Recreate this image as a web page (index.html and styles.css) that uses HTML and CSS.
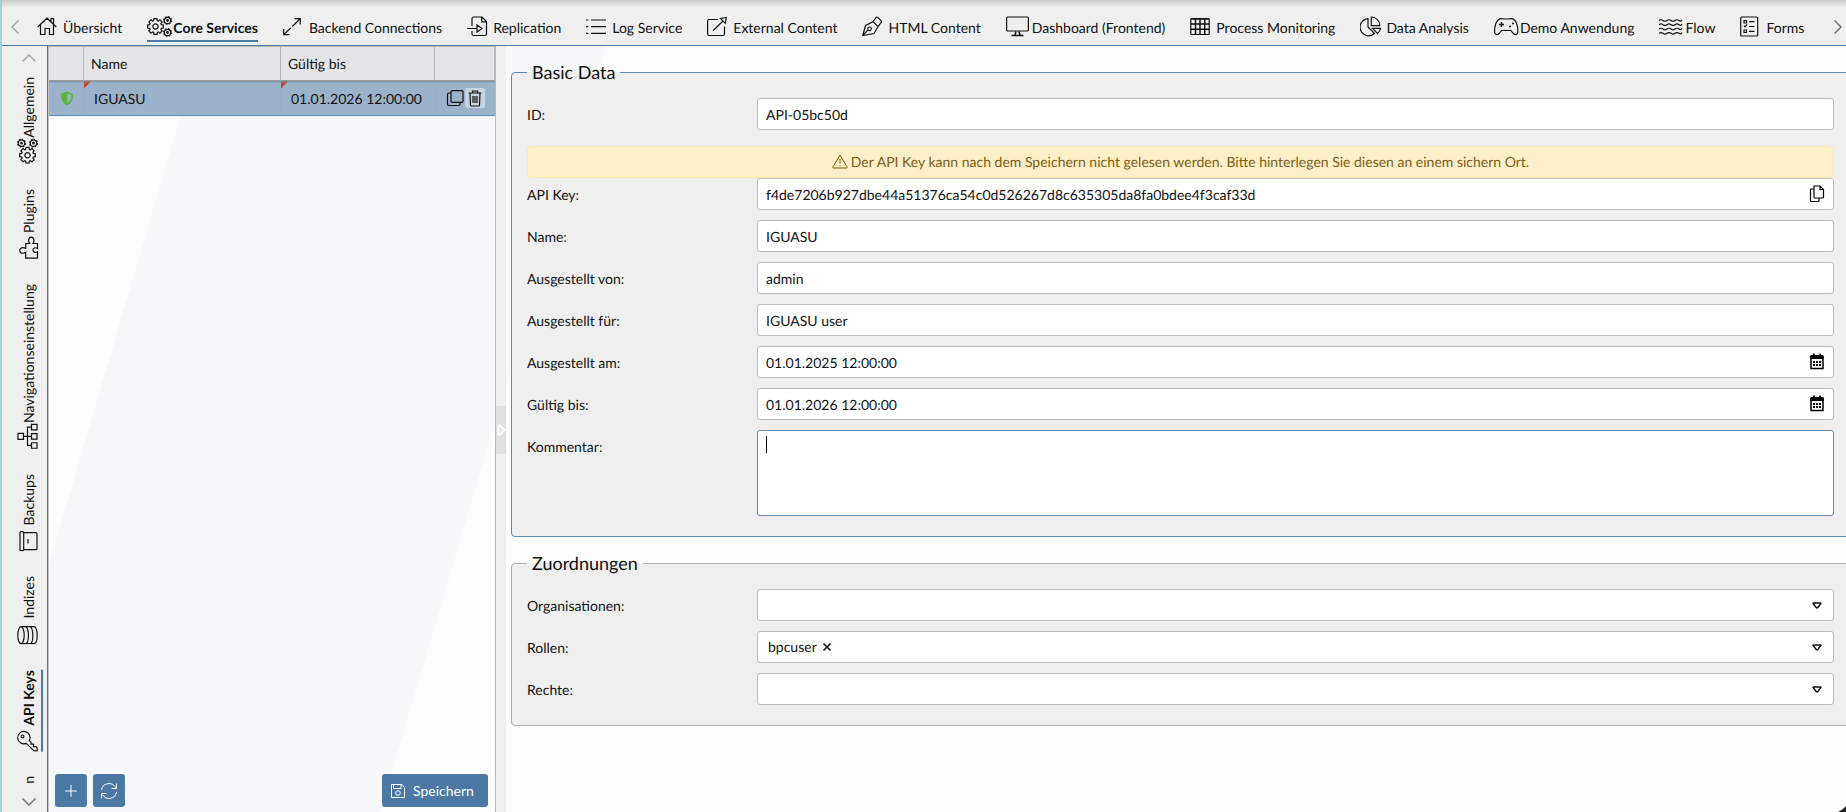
FILE: index.html
```
<!DOCTYPE html>
<html lang="de">
<head>
    <meta charset="UTF-8">
    <meta name="viewport" content="width=device-width, initial-scale=1.0">
    <title>API Keys</title>
    <link rel="stylesheet" href="styles.css">
</head>
<body>
    <svg class="sprite" aria-hidden="true">
        <symbol id="gear" viewBox="-9 -9 18 18" overflow="visible">
            <path vector-effect="non-scaling-stroke" d="M-1.9-6.2L-1.6-8.3H1.6L1.9-6.2 3-5.7 4.7-7 7-4.7 5.7-3 6.2-1.9 8.3-1.6V1.6L6.2 1.9 5.7 3 7 4.7 4.7 7 3 5.7 1.9 6.2 1.6 8.3H-1.6L-1.9 6.2-3 5.7-4.7 7-7 4.7-5.7 3-6.2 1.9-8.3 1.6V-1.6L-6.2-1.9-5.7-3-7-4.7-4.7-7-3-5.7Z"/>
            <circle vector-effect="non-scaling-stroke" r="2.8"/>
        </symbol>
        <symbol id="gears" viewBox="0 0 26 26">
            <use href="#gear" x="0" y="4" width="17" height="17"/>
            <circle cx="20.500" cy="6.500" r="3.200"/>
            <circle cx="20.500" cy="18.500" r="3.200"/>
            <circle cx="20.500" cy="6.500" r="3.900" stroke-dasharray="1.600 1.460"/>
            <circle cx="20.500" cy="18.500" r="3.900" stroke-dasharray="1.600 1.460"/>
            <circle cx="20.500" cy="6.500" r=".8"/>
            <circle cx="20.500" cy="18.500" r=".8"/>
        </symbol>
        <symbol id="calendar" viewBox="0 0 16 18">
            <path d="M2 5h12v10.500H2z" fill="none" stroke="#000" stroke-width="1.500"/>
            <path d="M1 3.500Q1 2 2.500 2H4V.5h1.800V2h4.400V.5H12V2h1.500Q15 2 15 3.500V6H1z" fill="#000"/>
            <path d="M4 8h2v2H4zM7 8h2v2H7zM10 8h2v2h-2zM4 11h2v2H4zM7 11h2v2H7zM10 11h2v2h-2z" fill="#000"/>
        </symbol>
    </svg>

    <nav class="topbar">
        <button class="scroll" aria-label="Zurück"><svg class="chevron" viewBox="0 0 10 16"><path d="M8.500 1.500 2 8l6.500 6.500"/></svg></button>
        <div class="tabs">
            <a href="#" class="tab"><svg viewBox="0 0 26 26"><path d="M.7 13 10 4.200l9.300 8.800M3.500 11v9.500H8v-6h4.500v6h4V11M14 7.500v-3h2.500v5.700"/></svg><span>Übersicht</span></a>
            <a href="#" class="tab active"><svg viewBox="0 0 26 26"><use href="#gears"/></svg><span>Core Services</span></a>
            <a href="#" class="tab"><svg viewBox="0 0 26 26"><path d="M1 20.400 7.800 14M9.200 12.500 17 5M11.500 4.700h5.800v5.800M.7 15v5.700h5.800"/></svg><span>Backend Connections</span></a>
            <a href="#" class="tab"><svg viewBox="0 0 26 26"><path d="M5 12V4.500A1.500 1.500 0 0 1 6.500 3H15l4.500 4.500v12.500a1.500 1.500 0 0 1-1.500 1.500H6.500A1.500 1.500 0 0 1 5 20v-3M14.700 3v4.800h4.800M0 14.500h9.500M10 11l5 3.500-5 3.500z"/></svg><span>Replication</span></a>
            <a href="#" class="tab"><svg viewBox="0 0 26 26"><path d="M0 6h2.200M5 6h15M0 12.700h2.200M5 12.700h15M0 19.300h2.200M5 19.300h15"/></svg><span>Log Service</span></a>
            <a href="#" class="tab"><svg viewBox="0 0 26 26"><path d="M11 5.500H2A1.500 1.500 0 0 0 .6 7v13A1.500 1.500 0 0 0 2 21.500h14a1.500 1.500 0 0 0 1.500-1.500v-7.500M6 16.700 16 7M13.500 4.500l5.800-1-1 5.800z"/></svg><span>External Content</span></a>
            <a href="#" class="tab"><svg viewBox="0 0 26 26"><path d="m.8 21.500 2.700-10L11 7.700l5 5-4 6.800zM1 21.200l5-5M11 7.700l3-4q1-1 2 0l3 3q1 1 0 2l-3 4"/><circle cx="7.500" cy="14.800" r="1.800"/></svg><span>HTML Content</span></a>
            <a href="#" class="tab"><svg viewBox="0 0 26 26"><rect x=".6" y="3" width="21.800" height="14" rx="1"/><path d="M10 17.500 9 21M13 17.500l1 3.500M5.500 21.500h12" stroke-width="1.600"/></svg><span>Dashboard (Frontend)</span></a>
            <a href="#" class="tab"><svg viewBox="0 0 26 26"><rect x=".8" y="4.500" width="18.400" height="16" rx="1"/><path d="M.8 5h18.400M.8 10h18.400M.8 15.300h18.400M5.500 5v15.500M10 5v15.500M14.700 5v15.500" stroke-width="1.500"/></svg><span>Process Monitoring</span></a>
            <a href="#" class="tab"><svg viewBox="0 0 26 26"><path d="M8 4.600a8.600 8.600 0 1 0 6.500 14.900L8 13zM11.300 3v8.700h8.500A8.500 8.500 0 0 0 11.300 3zM12.500 14.300h8a7 7 0 0 1-3 5.200z"/></svg><span>Data Analysis</span></a>
            <a href="#" class="tab"><svg viewBox="0 0 26 26"><path d="M4 6c2-1.600 4-1.500 6-1h4.500c2-.5 4-.6 6 1 2.500 3 3.600 8 3.300 12.500-.3 2.500-3.300 2.700-4.800.7L17 16.500H7.500l-2 2.700c-1.500 2-4.500 1.800-4.800-.7C.4 14 1.500 9 4 6z"/><path d="M7.500 8v5M5 10.500h5M15 12.500h2M18 9.500h2" stroke-width="1.600"/></svg><span>Demo Anwendung</span></a>
            <a href="#" class="tab"><svg viewBox="0 0 26 26"><path d="M0 6.500q2-1.500 4 0t4 0 4 0 4 0 4 0 3-.7M0 10.700q2-1.500 4 0t4 0 4 0 4 0 4 0 3-.7M0 15q2-1.500 4 0t4 0 4 0 4 0 4 0 3-.7M0 19.300q2-1.500 4 0t4 0 4 0 4 0 4 0 3-.7"/></svg><span>Flow</span></a>
            <a href="#" class="tab"><svg viewBox="0 0 26 26"><rect x=".7" y="3" width="17" height="19" rx="1"/><path d="M4 6.500h2.500V9H4zM4 11.500l1 1.300 2-2.300M4 16h2.500v2.500H4zM9 7.700h5.500M9 12.500h5.500M9 17.300h5.500"/></svg><span>Forms</span></a>
        </div>
        <button class="scroll" aria-label="Weiter"><svg class="chevron dark" viewBox="0 0 10 16"><path d="M1.500 1.500 8 8l-6.500 6.500"/></svg></button>
    </nav>

    <div class="workspace">
        <nav class="sidebar">
            <button class="scroll" aria-label="Nach oben"><svg class="chevron flat" viewBox="0 0 16 10"><path d="M1.500 8.500 8 2l6.500 6.500"/></svg></button>
            <div class="side-tabs">
                <a href="#" class="side-tab"><svg viewBox="0 0 26 26"><use href="#gears"/></svg><span>Allgemein</span></a>
                <a href="#" class="side-tab"><svg viewBox="0 0 26 26"><path d="M.8 22.500V10.700h6C5 8 5.500 4.700 8.500 4.700S12 8 10.500 10.700h5v4c2-1.700 6.300-1.400 6.300 1.600s-4.300 3.200-6.300 1.700v4.500h-5c1.500-2.500.5-4.500-1.500-4.500s-3 2-1.700 4.500z"/></svg><span>Plugins</span></a>
                <a href="#" class="side-tab"><svg viewBox="0 0 26 26"><path d="M9.500 3h6v5.500h-6zM.7 16.500h5.500v5.500H.7zM9.800 16.500h5.500v5.500H9.800zM19 16.500h5.500v5.500H19zM12.500 8.500v8M3.500 16.500v-4h18.300v4"/></svg><span>Navigationseinstellung</span></a>
                <a href="#" class="side-tab"><svg viewBox="0 0 26 26"><rect x=".7" y="5" width="19" height="3.700" rx="1"/><path d="M1.700 8.700v12q0 1.300 1.300 1.300h14.500q1.300 0 1.300-1.300v-12M8 13h4.500"/></svg><span>Backups</span></a>
                <a href="#" class="side-tab"><svg viewBox="0 0 26 26"><ellipse cx="9.300" cy="6" rx="8.500" ry="3.200"/><path d="M.8 6v13c0 4.200 17 4.200 17 0V6M.8 10.300c0 4.200 17 4.200 17 0M.8 14.700c0 4.200 17 4.200 17 0"/></svg><span>Indizes</span></a>
                <a href="#" class="side-tab active"><svg viewBox="0 0 26 26"><path d="M8.300 11.300A6.200 6.200 0 1 1 11 14.300L9.500 16H7.500v2.500H5V21l-1.500 1.200H.8V19z"/><circle cx="15.300" cy="7.500" r="1.400"/></svg><span>API Keys</span></a>
                <a href="#" class="side-tab"><span>n</span></a>
            </div>
            <button class="scroll" aria-label="Nach unten"><svg class="chevron flat dark" viewBox="0 0 16 10"><path d="M1.500 1.500 8 8l6.500-6.500"/></svg></button>
        </nav>

        <section class="keys">
            <table class="grid">
                <colgroup><col class="col-state"><col class="col-name"><col class="col-date"><col class="col-actions"></colgroup>
                <thead>
                    <tr><th></th><th>Name</th><th>Gültig bis</th><th></th></tr>
                </thead>
                <tbody>
                    <tr>
                        <td class="state"><svg class="shield" viewBox="0 0 14 15"><path d="M7 .5 13.300 3c0 5-1.800 9.500-6.300 11.500C2.500 12.500.7 8 .7 3z" fill="#5ab53c"/><path d="M7.300 2.500v9.800c2.700-1.800 4-4.800 4.200-8.100z" fill="#9ab3cb"/></svg></td>
                        <td class="dirty">IGUASU</td>
                        <td class="dirty">01.01.2026 12:00:00</td>
                        <td>
                            <div class="actions">
                                <button aria-label="Kopieren"><svg viewBox="0 0 18 18"><rect x="5" y="1.700" width="12" height="11.600" rx="1"/><path d="M5 4H3Q1.500 4 1.500 5.500V15q0 1.500 1.500 1.500h9.500q1.500 0 1.500-1.500v-1.700"/></svg></button>
                                <button class="hover" aria-label="Löschen"><svg viewBox="0 0 18 18"><path d="M2.500 4h13M6.500 4V2h5v2M4 4l.5 12q0 1 1 1h7q1 0 1-1L14 4M7 7v7M9 7v7M11 7v7"/></svg></button>
                            </div>
                        </td>
                    </tr>
                </tbody>
            </table>
            <div class="toolbar">
                <button class="btn icon" aria-label="Hinzufügen"><svg viewBox="0 0 18 18"><path d="M9 3v12M3 9h12"/></svg></button>
                <button class="btn icon" aria-label="Aktualisieren"><svg viewBox="0 0 18 18"><path d="M1.500 8A7.500 7.500 0 0 1 15.500 5.500M16.500 1.500v5h-5M16.500 10a7.500 7.500 0 0 1-14 2.500M1.500 16.500v-5h5"/></svg></button>
                <button class="btn save"><svg viewBox="0 0 16 16"><path d="M1.500 1.500h10.500l2.500 3v10h-13zM3.500 1.500v4h7.500v-4"/><circle cx="8" cy="10" r="2.300"/></svg>Speichern</button>
            </div>
        </section>

        <div class="splitter"><button aria-label="Bereich einklappen"><svg viewBox="0 0 10 14"><path d="M2.500 2.500v9q.5 1 1.500 0L8.500 7 4 2.500q-1-1-1.500 0z"/></svg></button></div>

        <main class="detail">
            <form>
                <fieldset class="focused">
                    <legend>Basic Data</legend>
                    <div class="row"><label for="id">ID:</label><input type="text" id="id" value="API-05bc50d"></div>
                    <p class="warning"><svg viewBox="0 0 16 15"><path d="M8 1 15.200 13.200Q15.400 14 14.500 14h-13Q.6 14 .8 13.200zM8 5v4.500M8 11v1.300"/></svg>Der API Key kann nach dem Speichern nicht gelesen werden. Bitte hinterlegen Sie diesen an einem sichern Ort.</p>
                    <div class="row">
                        <label for="key">API Key:</label>
                        <div class="field"><input type="text" id="key" value="f4de7206b927dbe44a51376ca54c0d526267d8c635305da8fa0bdee4f3caf33d"><button type="button" class="trigger" aria-label="API Key kopieren"><svg viewBox="0 0 16 18"><path d="M5 1h6l3.500 3.500v7.500q0 1-1 1H6q-1 0-1-1zM11 1v3.500h3.500M5 4H2.500q-1 0-1 1v10.500q0 1 1 1H9q1 0 1-1V13" fill="none" stroke="#000" stroke-width="1.200"/></svg></button></div>
                    </div>
                    <div class="row"><label for="name">Name:</label><input type="text" id="name" value="IGUASU"></div>
                    <div class="row"><label for="by">Ausgestellt von:</label><input type="text" id="by" value="admin"></div>
                    <div class="row"><label for="for">Ausgestellt für:</label><input type="text" id="for" value="IGUASU user"></div>
                    <div class="row">
                        <label for="issued">Ausgestellt am:</label>
                        <div class="field"><input type="text" id="issued" value="01.01.2025 12:00:00"><button type="button" class="trigger" aria-label="Datum wählen"><svg viewBox="0 0 16 18"><use href="#calendar"/></svg></button></div>
                    </div>
                    <div class="row">
                        <label for="until">Gültig bis:</label>
                        <div class="field"><input type="text" id="until" value="01.01.2026 12:00:00"><button type="button" class="trigger" aria-label="Datum wählen"><svg viewBox="0 0 16 18"><use href="#calendar"/></svg></button></div>
                    </div>
                    <div class="row">
                        <label for="comment">Kommentar:</label>
                        <div class="field caret"><textarea id="comment"></textarea></div>
                    </div>
                </fieldset>

                <fieldset>
                    <legend>Zuordnungen</legend>
                    <div class="row">
                        <label for="orgs">Organisationen:</label>
                        <div class="field"><select id="orgs"><option></option></select><svg class="arrow" viewBox="0 0 10 7"><path d="M1.500 1h7q.7 0 .3.700L6 5.300q-1 .8-2 0L1.200 1.700Q.8 1 1.500 1z"/></svg></div>
                    </div>
                    <div class="row">
                        <label for="roles">Rollen:</label>
                        <div class="field"><select id="roles"><option></option></select><span class="chip">bpcuser<button type="button" aria-label="bpcuser entfernen"><svg viewBox="0 0 10 10"><path d="m1.500 1.500 7 7M8.500 1.500l-7 7"/></svg></button></span><svg class="arrow" viewBox="0 0 10 7"><path d="M1.500 1h7q.7 0 .3.700L6 5.300q-1 .8-2 0L1.200 1.700Q.8 1 1.500 1z"/></svg></div>
                    </div>
                    <div class="row">
                        <label for="rights">Rechte:</label>
                        <div class="field"><select id="rights"><option></option></select><svg class="arrow" viewBox="0 0 10 7"><path d="M1.500 1h7q.7 0 .3.700L6 5.300q-1 .8-2 0L1.200 1.700Q.8 1 1.500 1z"/></svg></div>
                    </div>
                </fieldset>
            </form>
        </main>
    </div>
</body>
</html>
```
FILE: styles.css
```
* {
    box-sizing: border-box;
}
body {
    margin: 0;
    height: 100vh;
    display: flex;
    flex-direction: column;
    overflow: hidden;
    position: relative;
    border-left: 2px solid #a9d0d9;
    font-family: Lato, "Liberation Sans", sans-serif;
    font-size: 14px;
    text-rendering: geometricPrecision;
    color: #111;
    background: #fdfdfd;
}
/* darker end of the window edge and the rounded window corner */
body::before {
    content: "";
    position: absolute;
    left: -2px;
    bottom: 0;
    width: 2px;
    height: 80px;
    background: #4b79a4;
}
body::after {
    content: "";
    position: absolute;
    right: 0;
    bottom: 0;
    width: 8px;
    height: 6px;
    background: #1c201e;
    clip-path: polygon(100% 0, 100% 100%, 0 100%, 55% 60%);
}
button {
    padding: 0;
    border: none;
    background: none;
    font: inherit;
    cursor: pointer;
}
svg {
    flex: none;
    display: block;
    fill: none;
    stroke: #111;
    stroke-width: 1.2;
}
.sprite {
    position: absolute;
    width: 0;
    height: 0;
}

/* top navigation */
.topbar {
    display: flex;
    align-items: center;
    height: 46px;
    padding: 11px 3px 0 8px;
    border-bottom: 1px solid #4b79a4;
    background: linear-gradient(#cbcbcb, #efefef 8px);
}
.topbar .scroll {
    margin-bottom: 2px;
}
.tabs {
    flex: 1;
    display: flex;
    gap: 25px;
    min-width: 0;
    overflow: hidden;
    padding-left: 17px;
}
.tab {
    display: flex;
    align-items: center;
    height: 28px;
    border-bottom: 2px solid transparent;
    color: inherit;
    text-decoration: none;
    white-space: nowrap;
}
.tab svg,
.side-tab svg {
    width: 26px;
    height: 26px;
}
.tab.active {
    border-color: #4b79a4;
    font-weight: bold;
}
.chevron {
    width: 10px;
    height: 16px;
    stroke: #aaa;
    stroke-width: 1.5;
}
.chevron.flat {
    width: 16px;
    height: 10px;
}
.chevron.dark {
    stroke: #777;
}

.workspace {
    flex: 1;
    display: flex;
    min-height: 0;
    position: relative;
}
/* pale diagonal facets behind the panels */
.workspace::before,
.workspace::after {
    content: "";
    position: absolute;
    inset: 0;
    z-index: -1;
    background: #f7f8fa;
    clip-path: polygon(199px 0, 604px 0, 378px 100%, 0 100%, 0 679px);
}
.workspace::after {
    background: #f5f7f9;
    clip-path: polygon(129px 240px, 278px 100%, 0 100%, 0 679px);
}

/* side navigation */
.sidebar {
    width: 46px;
    display: flex;
    flex-direction: column;
    align-items: flex-start;
    padding: 7px 0 5px 13px;
    border-right: 1px solid #4b79a4;
    background: #efefef;
}
.sidebar .scroll {
    padding-left: 6px;
}
.side-tabs {
    flex: 1;
    min-height: 0;
    overflow: hidden;
    display: flex;
    flex-direction: column;
    gap: 25px;
    padding-top: 14px;
    margin-bottom: 10px;
}
.side-tab {
    flex: none;
    display: flex;
    align-items: center;
    writing-mode: vertical-rl;
    transform: rotate(180deg);
    width: 28px;
    border-left: 2px solid transparent;
    color: inherit;
    text-decoration: none;
    white-space: nowrap;
}
.side-tab svg {
    transform: rotate(90deg);
}
.side-tab.active {
    border-color: #4b79a4;
    font-weight: bold;
}

/* key list */
.keys {
    width: 448px;
    display: flex;
    flex-direction: column;
    border-left: 1px solid #c4c4c4;
    border-right: 1px solid #b8b8b8;
}
.grid {
    width: 100%;
    table-layout: fixed;
    border-collapse: separate;
    border-spacing: 0;
}
.col-state {
    width: 35px;
}
.col-name {
    width: 197px;
}
.col-date {
    width: 154px;
}
.grid th {
    height: 35px;
    padding: 0 7px;
    border-top: 1px solid #b8b8b8;
    border-right: 1px solid #b8b8b8;
    border-bottom: 1px solid #999;
    background: #e4e5e7;
    font-weight: normal;
    text-align: left;
}
.grid td {
    height: 35px;
    padding: 0 10px;
    background: #9ab3cb;
    border-bottom: 1px solid #6288ad;
    box-shadow: inset 0 2px 2px -1px #7890a6;
}
.grid .state {
    padding: 0 11px;
}
.grid .dirty {
    background: linear-gradient(135deg, #c8472c 5px, transparent 5px) no-repeat #9ab3cb;
}
.shield {
    width: 14px;
    height: 15px;
    stroke: none;
}
.actions {
    display: flex;
}
.actions button {
    padding: 1px;
    border-radius: 2px;
}
.actions button.hover {
    background: #c7d4e1;
}
.actions svg {
    width: 18px;
    height: 18px;
}
.toolbar {
    display: flex;
    gap: 6px;
    margin-top: auto;
    padding: 5px 7px 5px 6px;
}
.btn {
    display: flex;
    align-items: center;
    justify-content: center;
    height: 33px;
    border-radius: 3px;
    background: #4b79a4;
    color: #fff;
}
.btn svg {
    width: 18px;
    height: 18px;
    stroke: #fff;
    stroke-width: 1;
}
.btn.icon {
    width: 32px;
}
.btn.save {
    width: 106px;
    justify-content: flex-start;
    gap: 7px;
    margin-left: auto;
    padding-left: 8px;
}
.btn.save svg {
    width: 16px;
    height: 16px;
}

.splitter {
    width: 10px;
    display: flex;
    align-items: center;
    padding-top: 2px;
    background: #efefef;
}
.splitter button {
    height: 48px;
    background: #e1e1e1;
}
.splitter svg {
    width: 10px;
    height: 14px;
    stroke: #fff;
    stroke-width: 2;
}

/* form; the fieldsets run out under the right window edge */
.detail {
    flex: 1;
    min-width: 0;
    overflow: hidden;
    padding-left: 5px;
}
fieldset {
    min-width: 0;
    margin: 14px -4px 0 0;
    padding: 14px 15px 20px;
    border: 1px solid #b0b0b0;
    border-radius: 4px;
    background: #efefef;
}
fieldset.focused {
    border-color: #5c8ab3;
}
legend {
    padding: 0 5px;
    font-size: 18px;
    line-height: 24px;
}
.row {
    display: flex;
    align-items: flex-start;
    min-height: 32px;
    margin-top: 10px;
}
legend + .row {
    margin-top: 0;
}
.row label {
    width: 230px;
    margin-bottom: -2px;
    line-height: 34px;
}
.row > input,
.field {
    flex: 1;
    min-width: 0;
}
.field {
    position: relative;
    display: flex;
}
input,
textarea,
select {
    display: block;
    width: 100%;
    height: 32px;
    margin: 0;
    padding: 0 8px;
    border: 1px solid #bdbdbd;
    border-radius: 3px;
    background: #fff;
    color: inherit;
    font: inherit;
    text-rendering: inherit;
    outline: none;
}
select {
    appearance: none;
}
textarea {
    height: 86px;
    padding: 5px 8px;
    border-color: #5c8ab3;
    resize: none;
}
.caret::before {
    content: "";
    position: absolute;
    left: 9px;
    top: 6px;
    width: 1px;
    height: 17px;
    background: #000;
}
.trigger {
    position: absolute;
    right: 9px;
    top: 7px;
}
.trigger svg {
    width: 16px;
    height: 18px;
    stroke: none;
}
.arrow {
    position: absolute;
    right: 12px;
    top: 13px;
    width: 10px;
    height: 7px;
    stroke-width: 1.5;
    pointer-events: none;
}
.chip {
    position: absolute;
    left: 11px;
    top: 0;
    display: flex;
    align-items: center;
    gap: 5px;
    line-height: 32px;
}
.chip svg {
    width: 10px;
    height: 10px;
    stroke-width: 1.6;
}
.warning {
    display: flex;
    align-items: center;
    justify-content: center;
    gap: 3px;
    height: 32px;
    margin: 16px 0 0;
    padding-bottom: 1px;
    border: 1px solid #fde9b0;
    border-radius: 4px;
    background: #fdf0c9;
    color: #7d5b12;
}
.warning svg {
    width: 16px;
    height: 15px;
    stroke: #7d5b12;
    stroke-width: 1;
}
.warning + .row {
    margin-top: 0;
}
```
